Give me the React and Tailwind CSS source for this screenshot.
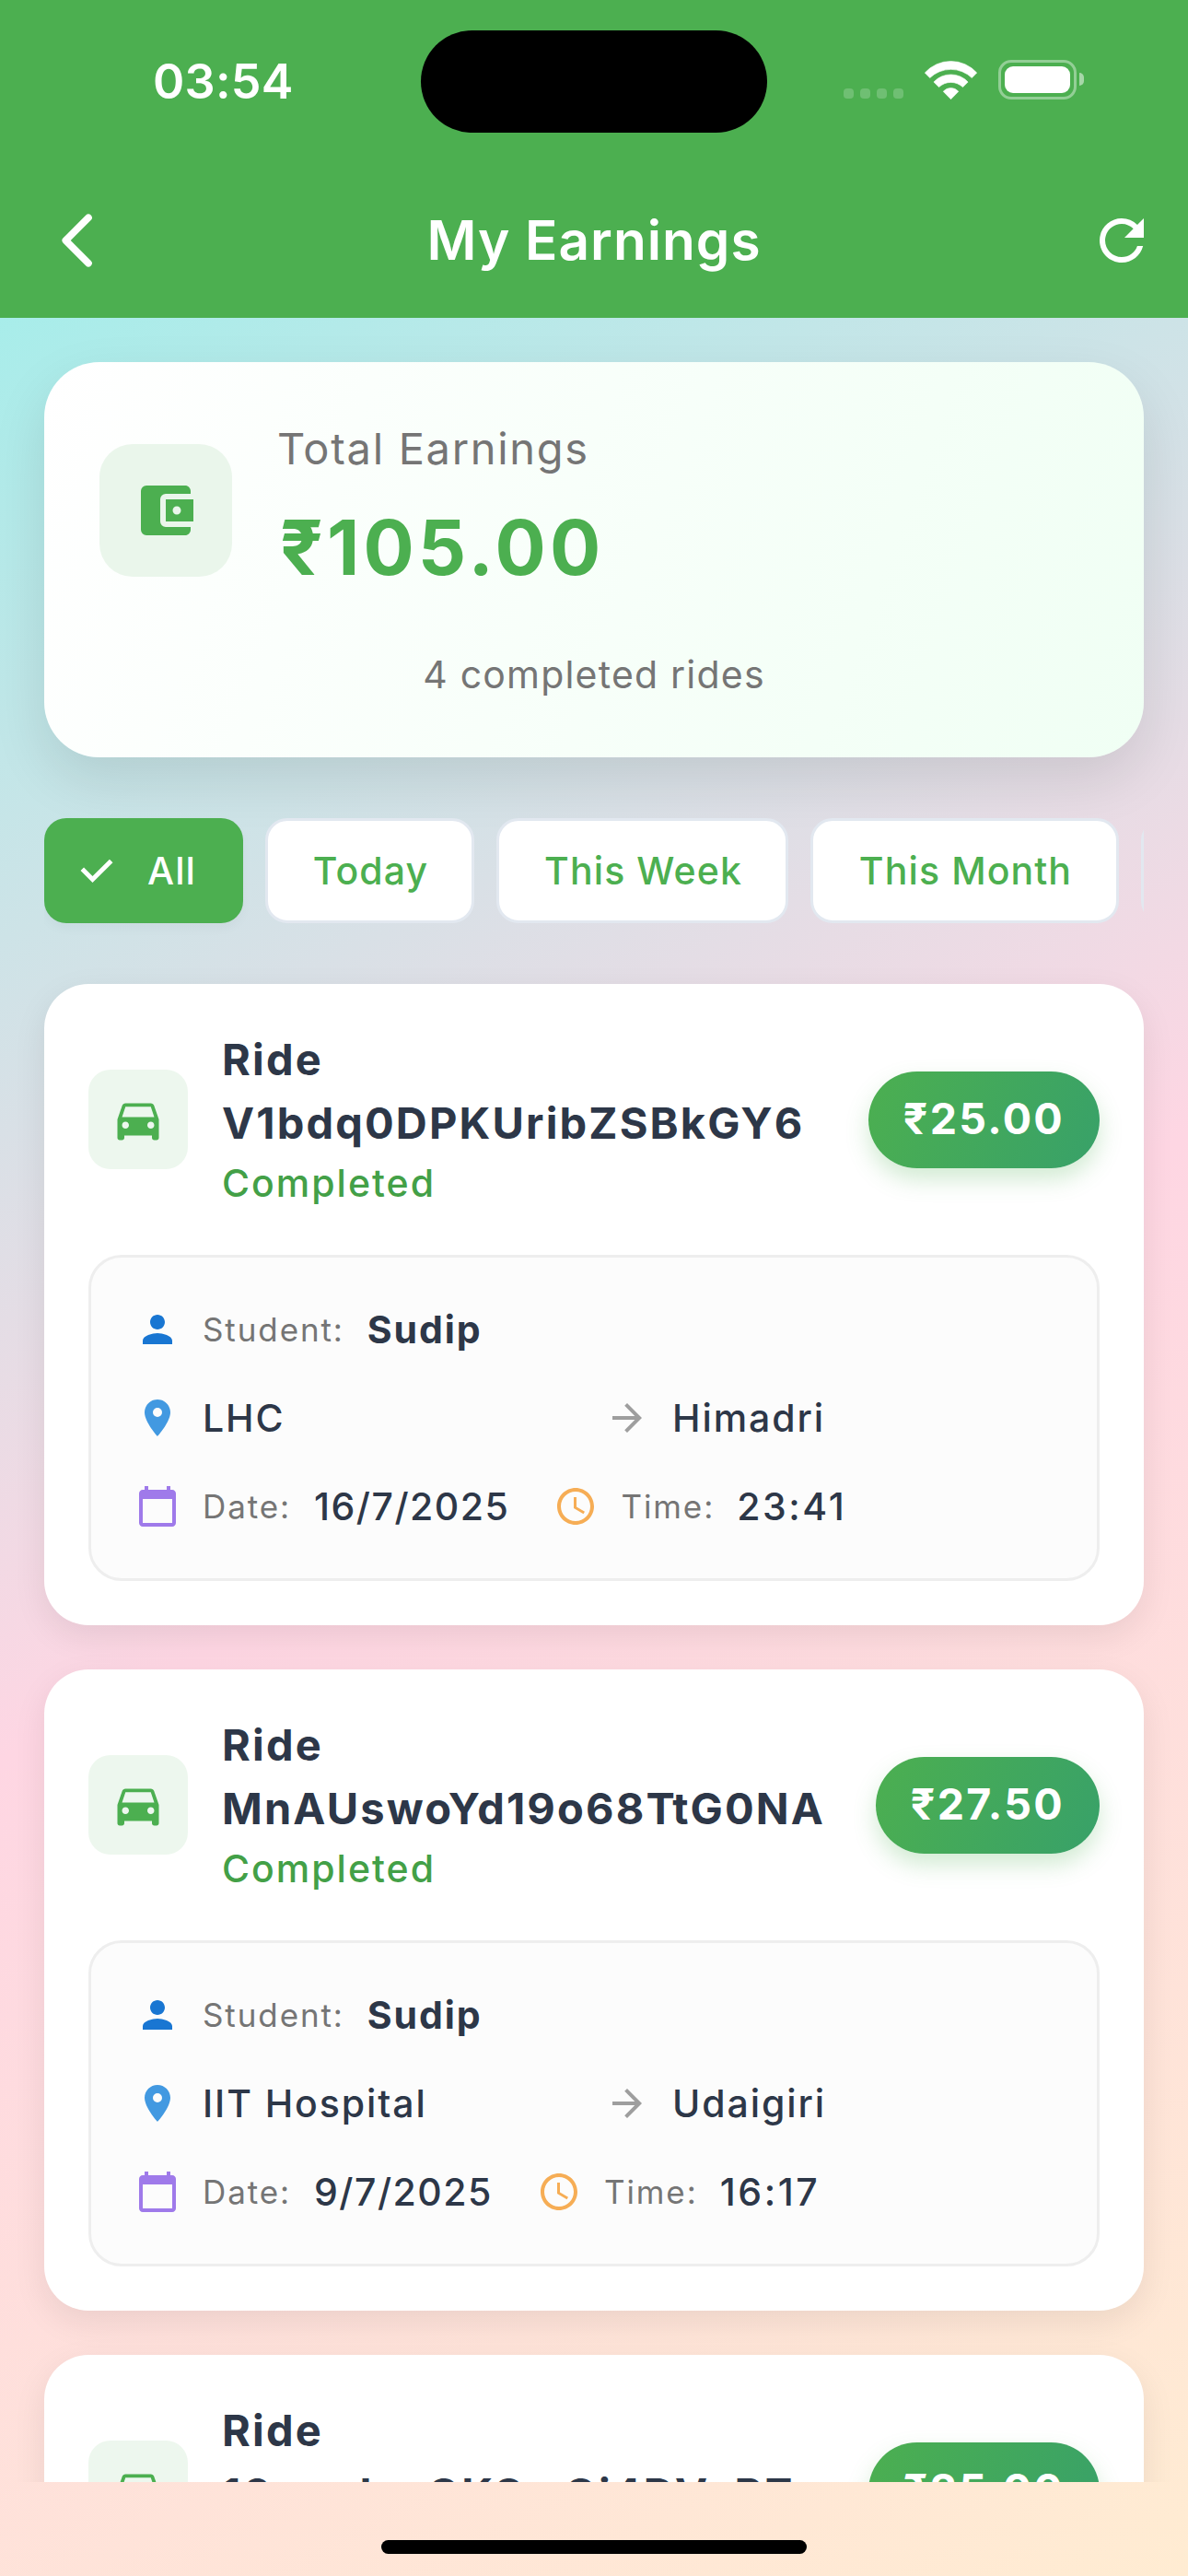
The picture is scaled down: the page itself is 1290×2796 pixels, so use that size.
import { MdAccountBalanceWallet, MdDirectionsCar, MdPerson, MdLocationOn, MdCalendarToday, MdAccessTime, MdArrowForward, MdRefresh } from "react-icons/md";

const rides = [
  { id: "V1bdq0DPKUribZSBkGY6", fare: "₹25.00", from: "LHC", to: "Himadri", date: "16/7/2025", time: "23:41" },
  { id: "MnAUswoYd19o68TtG0NA", fare: "₹27.50", from: "IIT Hospital", to: "Udaigiri", date: "9/7/2025", time: "16:17" },
  { id: "10nmdezGKSrrGi4DVePZ", fare: "₹25.00" },
];

function StatusBar() {
  return (
    <div className="relative h-[177px] flex items-center justify-between pl-[166px] pr-[113px]">
      <div className="text-[52px] font-semibold leading-[60px] tracking-[0.3px]">03:54</div>
      <div className="absolute left-[457px] top-[33px] w-[376px] h-[111px] rounded-full bg-black" />
      <div className="flex items-center pb-[5px]">
        <div className="flex gap-[7px] mt-[31px] mr-[23px]">
          {[0, 1, 2, 3].map((i) => (
            <div key={i} className="size-[11px] rounded-[4px] bg-white/20" />
          ))}
        </div>
        <svg className="w-[57px] h-[43px] mr-[23px]" viewBox="0 0 57 43" fill="#fff" stroke="#fff" strokeWidth="0.6" strokeLinejoin="round">
          <path d="M0.300 14A38 38 0 0 1 56.700 14L51.300 19.500A33 33 0 0 0 5.700 19.500Z" />
          <path d="M9.900 24A25.400 25.400 0 0 1 47.100 24L41.500 29.600A18.800 18.800 0 0 0 15.500 29.600Z" />
          <path d="M20.200 34.300A11 11 0 0 1 36.800 34.300L28.500 42.700Z" />
        </svg>
        <div className="flex items-center gap-[3px]">
          <div className="w-[85px] h-[43px] rounded-[14px] border-[3px] border-white/40 p-[4px]">
            <div className="h-full rounded-[9px] bg-white" />
          </div>
          <div className="w-[5px] h-[14px] rounded-r-full bg-white/50" />
        </div>
      </div>
    </div>
  );
}

function Chip({ label, width }) {
  return (
    <div className={`${width} h-[114px] shrink-0 rounded-[24px] border-[3px] border-[#e2e8f0] bg-white text-[#4caf50] flex items-center justify-center pl-[2px] pt-[1px] whitespace-nowrap`}>
      {label}
    </div>
  );
}

function SelectedChip({ label }) {
  return (
    <div className="h-[114px] w-[216px] shrink-0 rounded-[24px] bg-[#4caf50] text-white flex items-center pl-[39px] shadow-[0_6px_12px_rgba(0,0,0,0.03)]">
      <svg className="w-[36px] h-[27px] mr-[37px]" viewBox="0 0 36 27" fill="none" stroke="#fff" strokeWidth="5">
        <path d="M2.300 11.300L13.500 22.500L33.700 2.400" />
      </svg>
      <span className="pt-[1px]">{label}</span>
    </div>
  );
}

function Label({ children }) {
  return <span className="ml-[25px] text-[35px] font-normal text-[#757575] tracking-[1.9px]">{children}</span>;
}

function RideDetails({ ride }) {
  return (
    <div className="mt-[48px] h-[354px] rounded-[36px] border-[3px] border-[#eeeeee] bg-[#fcfcfc] px-[48px] pt-[30px] text-[41px] font-medium text-[#2d3748] tracking-[1.9px]">
      <div className="flex items-center h-[96px]">
        <MdPerson className="size-[48px] text-[#1976d2]" />
        <Label>Student:</Label>
        <span className="ml-[25px] pt-[1px] font-bold">Sudip</span>
      </div>
      <div className="flex items-center h-[96px]">
        <MdLocationOn className="size-[48px] text-[#4299e1]" />
        <span className="ml-[25px] mr-[23px] w-[414px] pt-[1px]">{ride.from}</span>
        <MdArrowForward className="size-[48px] text-[#9e9e9e]" />
        <span className="ml-[25px] pt-[1px]">{ride.to}</span>
      </div>
      <div className="flex items-center h-[96px]">
        <MdCalendarToday className="size-[48px] text-[#9f7aea]" />
        <Label>Date:</Label>
        <span className="ml-[25px] pt-[1px] tracking-[1.5px]">{ride.date}</span>
        <MdAccessTime className="ml-[48px] size-[48px] text-[#f6ad55]" />
        <Label>Time:</Label>
        <span className="ml-[24px] pt-[1px] tracking-[2.6px]">{ride.time}</span>
      </div>
    </div>
  );
}

function RideCard({ ride }) {
  return (
    <div className="h-[696px] shrink-0 rounded-[48px] bg-white p-[48px] shadow-[0_12px_36px_rgba(0,0,0,0.08)]">
      <div className="flex items-center h-[198px]">
        <div className="size-[108px] rounded-[24px] bg-[#edf7ee] flex items-center justify-center">
          <MdDirectionsCar className="size-[60px] text-[#4caf50]" />
        </div>
        <div className="ml-[37px] flex-1">
          <div className="-mt-[1px] mb-[1px] text-[47px] leading-[69px] font-bold text-[#2d3748] tracking-[2.15px]">
            Ride
            <br />
            {ride.id}
          </div>
          <div className="text-[41px] leading-[60px] font-medium text-[#43a047] tracking-[2px]">Completed</div>
        </div>
        <div className="h-[105px] rounded-full bg-[linear-gradient(113deg,#4caf50,#38a169)] px-[38px] flex items-center text-white text-[46.5px] font-bold tracking-[2.3px] shadow-[0_12px_24px_rgba(76,175,80,0.25)]">
          {ride.fare}
        </div>
      </div>
      {ride.date && <RideDetails ride={ride} />}
    </div>
  );
}

export default function App() {
  return (
    <div className="w-[1290px] h-[2796px] flex flex-col overflow-hidden font-['Inter',sans-serif] bg-white">
      <header className="h-[345px] shrink-0 bg-[#4caf50] text-white">
        <StatusBar />
        <div className="h-[168px] flex items-center justify-between px-[36px]">
          <div className="w-[84px] flex pl-[31px]">
            <svg className="w-[33px] h-[58px]" viewBox="0 0 33 58" fill="none" stroke="#fff" strokeWidth="7.600" strokeLinecap="round" strokeLinejoin="round">
              <path d="M29 4.300L4.300 29L29 53.700" />
            </svg>
          </div>
          <h1 className="text-[58.5px] font-[560] tracking-[1px]">My Earnings</h1>
          <div className="w-[84px] flex justify-end">
            <MdRefresh className="size-[72px]" />
          </div>
        </div>
      </header>
      <main className="flex-1 min-h-0 flex flex-col bg-[linear-gradient(152.24deg,#a8edea_0%,#fed6e3_50%,#ffecd2_100%)]">
        <div className="flex-1 min-h-0 overflow-hidden px-[48px] pt-[48px]">
          <section className="h-[429px] rounded-[60px] bg-[linear-gradient(110deg,#ffffff,#f0fff4)] px-[60px] pt-[54px] shadow-[0_24px_60px_rgba(0,0,0,0.1)]">
            <div className="flex items-center h-[213px]">
              <div className="size-[144px] rounded-[36px] bg-[#eaf6eb] flex items-center justify-center">
                <MdAccountBalanceWallet className="size-[72px] text-[#4caf50]" />
              </div>
              <div className="ml-[49px] flex flex-col gap-[14px]">
                <div className="text-[47px] leading-[68px] text-[#757575] tracking-[1.7px]">Total Earnings</div>
                <div className="pl-[3px] text-[82px] leading-[120px] font-bold text-[#4caf50] tracking-[4.1px]">₹105.00</div>
              </div>
            </div>
            <div className="mt-[42px] text-center text-[41px] leading-[60px] text-[#757575] tracking-[1.2px]">4 completed rides</div>
          </section>
          <div className="mt-[66px] flex gap-[24px] overflow-x-clip text-[41px] font-medium tracking-[1.1px]">
            <SelectedChip label="All" />
            <Chip label="Today" width="w-[227px]" />
            <Chip label="This Week" width="w-[317px]" />
            <Chip label="This Month" width="w-[335px]" />
            <Chip width="w-[280px]" />
          </div>
          <div className="mt-[66px] flex flex-col gap-[48px]">
            {rides.map((ride) => (
              <RideCard key={ride.id} ride={ride} />
            ))}
          </div>
        </div>
        <footer className="h-[102px] shrink-0 flex justify-center items-end pb-[24px]">
          <div className="w-[462px] h-[15px] rounded-full bg-black" />
        </footer>
      </main>
    </div>
  );
}
